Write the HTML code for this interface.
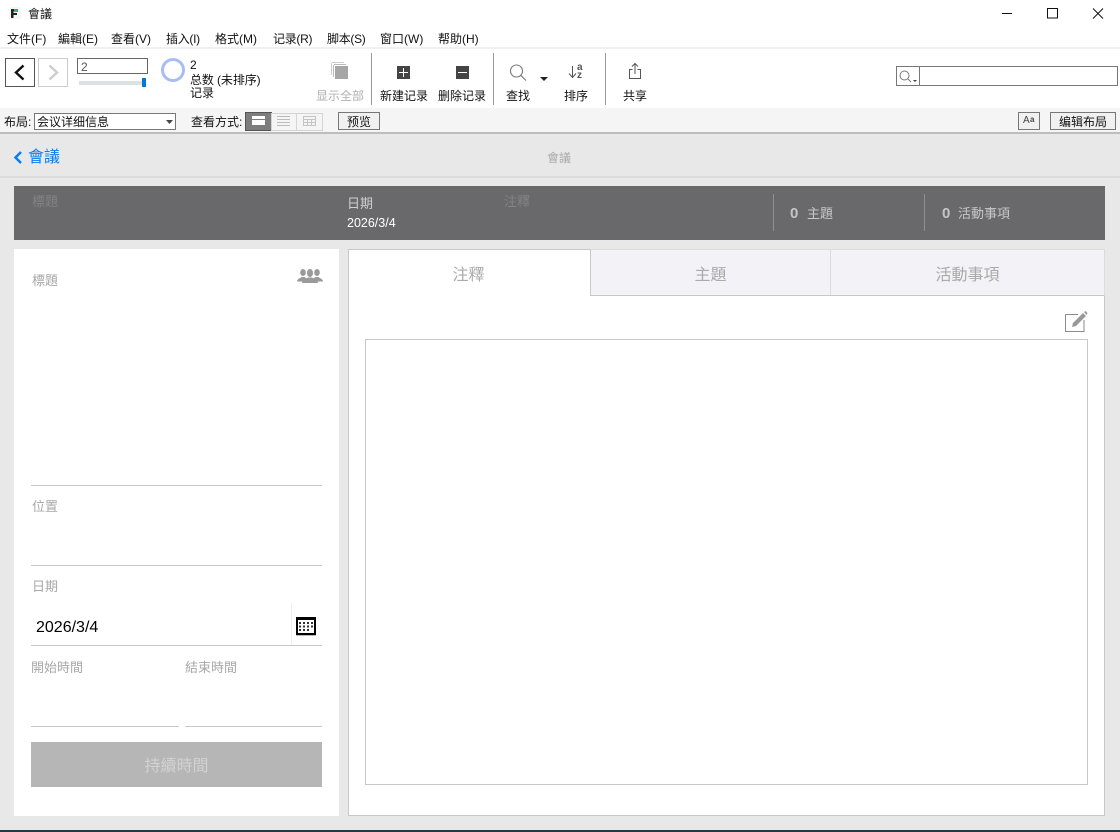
<!DOCTYPE html>
<html lang="zh"><head><meta charset="utf-8"><title>會議</title>
<style>
html,body{margin:0;padding:0}
body{width:1120px;height:832px;overflow:hidden;position:relative;background:#e8e8e8;font-family:"Liberation Sans","Noto Sans CJK TC",sans-serif;color:#111}
.a,.t{position:absolute;box-sizing:border-box}
.t{white-space:nowrap;font-size:12px;line-height:14px}
.c{text-align:center}
svg{position:absolute;overflow:visible}
</style></head><body>
<!-- title + menu -->
<div class="a" style="left:0;top:0;width:1120px;height:47px;background:#fff"></div>
<div class="a" style="left:0;top:47px;width:1120px;height:2px;background:#f0f0f0"></div>
<div class="a" style="left:0;top:49px;width:1120px;height:59px;background:#fff"></div>
<div class="a" style="left:0;top:108px;width:1120px;height:24px;background:#f5f5f5"></div>
<div class="a" style="left:0;top:132px;width:1120px;height:2px;background:#bdbdbd"></div>

<svg style="left:9px;top:7px" width="12" height="12"><rect x="0" y="0" width="12" height="12" rx="2" fill="#f6f6f6"/><path d="M2 2h7v2.500H4.500V6H8v2H4.500v3H2z" fill="#222"/><rect x="5" y="2" width="4" height="2" fill="#2fae6b"/></svg>
<div class="t" style="left:28px;top:7px;font-size:12px">會議</div>
<div class="t" style="left:7px;top:32px">文件(F)</div>
<div class="t" style="left:58px;top:32px">編輯(E)</div>
<div class="t" style="left:111px;top:32px">查看(V)</div>
<div class="t" style="left:166px;top:32px;letter-spacing:-.3px">插入(I)</div>
<div class="t" style="left:215px;top:32px">格式(M)</div>
<div class="t" style="left:273px;top:32px;letter-spacing:-.3px">记录(R)</div>
<div class="t" style="left:327px;top:32px;letter-spacing:-.3px">脚本(S)</div>
<div class="t" style="left:380px;top:32px">窗口(W)</div>
<div class="t" style="left:438px;top:32px">帮助(H)</div>
<svg style="left:1002px;top:13px" width="106" height="14" fill="none" stroke="#111" stroke-width="1"><path d="M0 .5H10"/><rect x="45.500" y="-4.500" width="10" height="9.500" /><path d="M91-4.500 101 5.500M101-4.500 91 5.500"/></svg>

<!-- nav -->
<div class="a" style="left:5px;top:58px;width:30px;height:29px;border:1px solid #555;background:#fff"></div>
<svg style="left:5px;top:58px" width="30" height="29" fill="none" stroke="#111" stroke-width="2.400"><path d="M18.500 7.500 11 14.500 18.500 21.500"/></svg>
<div class="a" style="left:38px;top:58px;width:30px;height:29px;border:1px solid #ccc;background:#fff"></div>
<svg style="left:38px;top:58px" width="30" height="29" fill="none" stroke="#ccc" stroke-width="2.400"><path d="M11.500 7.500 19 14.500 11.500 21.500"/></svg>
<div class="a" style="left:77px;top:58px;width:71px;height:16px;border:1px solid #666;background:#fff"></div>
<div class="t" style="left:81px;top:60px;color:#555">2</div>
<div class="a" style="left:79px;top:81px;width:67px;height:4px;background:#dce2e2"></div>
<div class="a" style="left:142px;top:78px;width:4px;height:9px;background:#0078d7"></div>
<div class="a" style="left:161px;top:58px;width:24px;height:24px;border:3px solid #a9bdf5;border-radius:50%"></div>
<div class="t" style="left:190px;top:58px">2</div>
<div class="t" style="left:190px;top:73px;letter-spacing:-.1px">总数 (未排序)</div>
<div class="t" style="left:190px;top:86px">记录</div>

<svg style="left:331px;top:62px" width="18" height="18"><path d="M1 .5H13M.5 1V13" stroke="#ccc" fill="none"/><path d="M3 2.500H15M2.500 3V15" stroke="#bbb" fill="none"/><rect x="4" y="4" width="13" height="13" fill="#a6a6a6"/></svg>
<div class="t c" style="left:310px;top:89px;width:60px;color:#b0b0b0">显示全部</div>
<div class="a" style="left:371px;top:53px;width:1px;height:52px;background:#999"></div>

<div class="a" style="left:397px;top:66px;width:13px;height:13px;background:#444"></div>
<svg style="left:397px;top:66px" width="13" height="13" stroke="#fff" stroke-width="1"><path d="M2 6.500h9M6.500 2v9"/></svg>
<div class="t c" style="left:374px;top:89px;width:60px">新建记录</div>
<div class="a" style="left:456px;top:66px;width:13px;height:13px;background:#444"></div>
<svg style="left:456px;top:66px" width="13" height="13" stroke="#fff" stroke-width="1"><path d="M2 6.500h9"/></svg>
<div class="t c" style="left:432px;top:89px;width:60px">删除记录</div>
<div class="a" style="left:493px;top:53px;width:1px;height:52px;background:#999"></div>

<svg style="left:510px;top:65px" width="17" height="16" fill="none" stroke="#777" stroke-width="1.100"><circle cx="6.500" cy="6" r="6"/><path d="M10.800 10.300 16 15.500"/></svg>
<svg style="left:540px;top:77px" width="8" height="5"><path d="M0 0H8L4 4z" fill="#222"/></svg>
<div class="t c" style="left:498px;top:89px;width:40px">查找</div>
<svg style="left:568px;top:64px" width="16" height="15" fill="none" stroke="#555"><path d="M4.500 2V13M1 9.500 4.500 13.500 8 9.500"/></svg>
<div class="t" style="left:577px;top:63px;font-size:10px;line-height:9px;color:#555;font-weight:bold">a</div>
<div class="t" style="left:577px;top:71px;font-size:10px;line-height:9px;color:#555;font-weight:bold">z</div>
<div class="t c" style="left:556px;top:89px;width:40px">排序</div>
<div class="a" style="left:605px;top:53px;width:1px;height:52px;background:#999"></div>
<svg style="left:629px;top:63px" width="13" height="16" fill="none" stroke="#555"><path d="M3.500 6.500H.5V15.500H11.500V6.500H8.500M6 11V1M3 3.500 6 .5 9 3.500"/></svg>
<div class="t c" style="left:615px;top:89px;width:40px">共享</div>

<div class="a" style="left:896px;top:66px;width:222px;height:20px;border:1px solid #777;background:#fff"></div>
<div class="a" style="left:919px;top:66px;width:1px;height:20px;background:#777"></div>
<svg style="left:899px;top:70px" width="19" height="13" fill="none" stroke="#777"><circle cx="5.500" cy="5.500" r="4.500"/><path d="M9 9 12 12"/><path d="M14 10h4l-2 2z" fill="#444" stroke="none"/></svg>

<!-- layout bar -->
<div class="t" style="left:4px;top:115px">布局:</div>
<div class="a" style="left:34px;top:113px;width:142px;height:17px;border:1px solid #777;background:#fff"></div>
<div class="t" style="left:37px;top:115px">会议详细信息</div>
<svg style="left:166px;top:120px" width="8" height="5"><path d="M0 0H7L3.500 4z" fill="#444"/></svg>
<div class="t" style="left:191px;top:115px">查看方式:</div>
<div class="a" style="left:245px;top:112px;width:27px;height:19px;background:#7d7d7d;border:1px solid #555"></div>
<div class="a" style="left:252px;top:116px;width:13px;height:9px;background:#fff"></div>
<div class="a" style="left:252px;top:119px;width:13px;height:1px;background:#7d7d7d"></div>
<div class="a" style="left:271px;top:113px;width:26px;height:18px;border:1px solid #d4d4d4;background:#f5f5f5"></div>
<svg style="left:277px;top:116px" width="14" height="11" stroke="#bbb"><path d="M0 .5H13M0 3.500H13M0 6.500H13M0 9.500H13"/></svg>
<div class="a" style="left:296px;top:113px;width:27px;height:18px;border:1px solid #d4d4d4;background:#f5f5f5"></div>
<svg style="left:303px;top:116px" width="14" height="11" fill="none" stroke="#c4c4c4"><rect x=".5" y=".5" width="12" height="9"/><path d="M.5 3.500H12.500M.5 6.500H12.500M4.500 3.500V9.500M8.500 3.500V9.500"/></svg>
<div class="a" style="left:338px;top:112px;width:42px;height:18px;border:1px solid #777;background:#f1f1f1"></div>
<div class="t c" style="left:338px;top:115px;width:42px">预览</div>
<div class="a" style="left:1018px;top:112px;width:22px;height:18px;border:1px solid #777;background:#f1f1f1"></div>
<div class="t" style="left:1023px;top:114px;font-size:10px;color:#444">A</div>
<div class="t" style="left:1030px;top:113px;font-size:8px;color:#444;font-weight:bold">a</div>
<div class="a" style="left:1050px;top:112px;width:66px;height:18px;border:1px solid #777;background:#f1f1f1"></div>
<div class="t c" style="left:1050px;top:115px;width:66px">编辑布局</div>

<!-- header -->
<svg style="left:13px;top:150px" width="10" height="15" fill="none" stroke="#0a7cf0" stroke-width="2.500"><path d="M8 2 2.500 7.500 8 13"/></svg>
<div class="t" style="left:28px;top:149px;font-size:16px;line-height:18px;color:#0a7cf0">會議</div>
<div class="t c" style="left:529px;top:151px;width:60px;color:#aaa">會議</div>
<div class="a" style="left:0;top:176px;width:1120px;height:2px;background:#dcdcdc"></div>

<!-- dark bar -->
<div class="a" style="left:14px;top:186px;width:1091px;height:54px;background:#69696b"></div>
<div class="t" style="left:32px;top:195px;font-size:13px;color:#838385">標題</div>
<div class="t" style="left:347px;top:197px;font-size:13px;color:#d0d0d0">日期</div>
<div class="t" style="left:347px;top:216px;font-size:12.500px;color:#fff">2026/3/4</div>
<div class="t" style="left:504px;top:195px;font-size:13px;color:#838385">注釋</div>
<div class="a" style="left:773px;top:194px;width:1px;height:37px;background:#8f8f8f"></div>
<div class="a" style="left:924px;top:194px;width:1px;height:37px;background:#8f8f8f"></div>
<div class="t" style="left:790px;top:207px;font-size:15px;font-weight:bold;color:#c4c4c4">0</div>
<div class="t" style="left:807px;top:207px;font-size:13px;color:#c8c8c8">主題</div>
<div class="t" style="left:942px;top:207px;font-size:15px;font-weight:bold;color:#c4c4c4">0</div>
<div class="t" style="left:958px;top:207px;font-size:13px;color:#c8c8c8">活動事項</div>

<!-- left panel -->
<div class="a" style="left:14px;top:249px;width:325px;height:567px;background:#fff"></div>
<div class="t" style="left:32px;top:274px;font-size:13px;color:#a8a8a8">標題</div>
<svg style="left:297px;top:268px" width="26" height="16" fill="#9a9a9a"><ellipse cx="6" cy="4.500" rx="2.800" ry="3.500"/><ellipse cx="20" cy="4.500" rx="2.800" ry="3.500"/><path d="M0 13.500c0-2.500 3-3 4.500-4.500h3l3 2-2 2.500zM26 13.500c0-2.500-3-3-4.500-4.500h-3l-3 2 2 2.500z"/><ellipse cx="13" cy="5" rx="3" ry="4"/><path d="M5 15c0-3 4-4 6-5.500h4c2 1.500 6 2.500 6 5.500z"/></svg>
<div class="a" style="left:31px;top:485px;width:291px;height:1px;background:#c8c8c8"></div>
<div class="t" style="left:32px;top:500px;font-size:13px;color:#a8a8a8">位置</div>
<div class="a" style="left:31px;top:565px;width:291px;height:1px;background:#c8c8c8"></div>
<div class="t" style="left:32px;top:580px;font-size:13px;color:#a8a8a8">日期</div>
<div class="t" style="left:36px;top:619px;font-size:16px;line-height:18px;color:#000">2026/3/4</div>
<div class="a" style="left:291px;top:603px;width:1px;height:42px;background:#eee"></div>
<svg style="left:296px;top:617px" width="20" height="19"><rect x="0" y="0" width="20" height="18" fill="#000"/><rect y="18" width="20" height="1" fill="#bbb"/><rect x="2" y="3" width="16" height="13" fill="#fff"/><path d="M3 5h2v2H3zM7 5h2v2H7zM11 5h2v2h-2zM15 5h2v2h-2zM3 8.500h2v2H3zM7 8.500h2v2H7zM11 8.500h2v2h-2zM15 8.500h2v2h-2zM3 12h2v2H3zM7 12h2v2H7zM11 12h2v2h-2z" fill="#333"/></svg>
<div class="a" style="left:31px;top:645px;width:291px;height:1px;background:#c8c8c8"></div>
<div class="t" style="left:31px;top:661px;font-size:13px;color:#a8a8a8">開始時間</div>
<div class="t" style="left:185px;top:661px;font-size:13px;color:#a8a8a8">結束時間</div>
<div class="a" style="left:31px;top:726px;width:148px;height:1px;background:#c8c8c8"></div>
<div class="a" style="left:185px;top:726px;width:137px;height:1px;background:#c8c8c8"></div>
<div class="a" style="left:31px;top:742px;width:291px;height:45px;background:#b6b6b6"></div>
<div class="t c" style="left:31px;top:758px;width:291px;font-size:16px;line-height:18px;color:#d2d2d2">持續時間</div>

<!-- right panel -->
<div class="a" style="left:348px;top:249px;width:757px;height:567px;background:#fff;border:1px solid #c8c8c8"></div>
<div class="a" style="left:590px;top:249px;width:515px;height:47px;background:#f2f2f7;border-top:1px solid #dcdcdc;border-bottom:1px solid #c8c8c8;border-right:1px solid #dcdcdc"></div>
<div class="a" style="left:590px;top:249px;width:1px;height:47px;background:#c8c8c8"></div>
<div class="a" style="left:830px;top:249px;width:1px;height:46px;background:#dcdcdc"></div>
<div class="t c" style="left:349px;top:267px;width:241px;font-size:16px;line-height:18px;color:#aaa;margin-left:-1px">注釋</div>
<div class="t c" style="left:591px;top:267px;width:239px;font-size:16px;line-height:18px;color:#aaa">主題</div>
<div class="t c" style="left:831px;top:267px;width:273px;font-size:16px;line-height:18px;color:#aaa">活動事項</div>
<svg style="left:1065px;top:311px" width="23" height="22"><path d="M.5 3.500H13M.5 3.500V20.500H19V9" fill="none" stroke="#8a8a8a"/><path d="M7 16 8 12 18 2 21 5 11 15z" fill="#999"/><path d="M19 1 20.500 0 22.500 2 21.500 4z" fill="#999"/></svg>
<div class="a" style="left:365px;top:339px;width:723px;height:446px;border:1px solid #c8c8c8;background:#fff"></div>
<div class="a" style="left:0;top:830px;width:1120px;height:2px;background:#1f3b4a"></div>
</body></html>
